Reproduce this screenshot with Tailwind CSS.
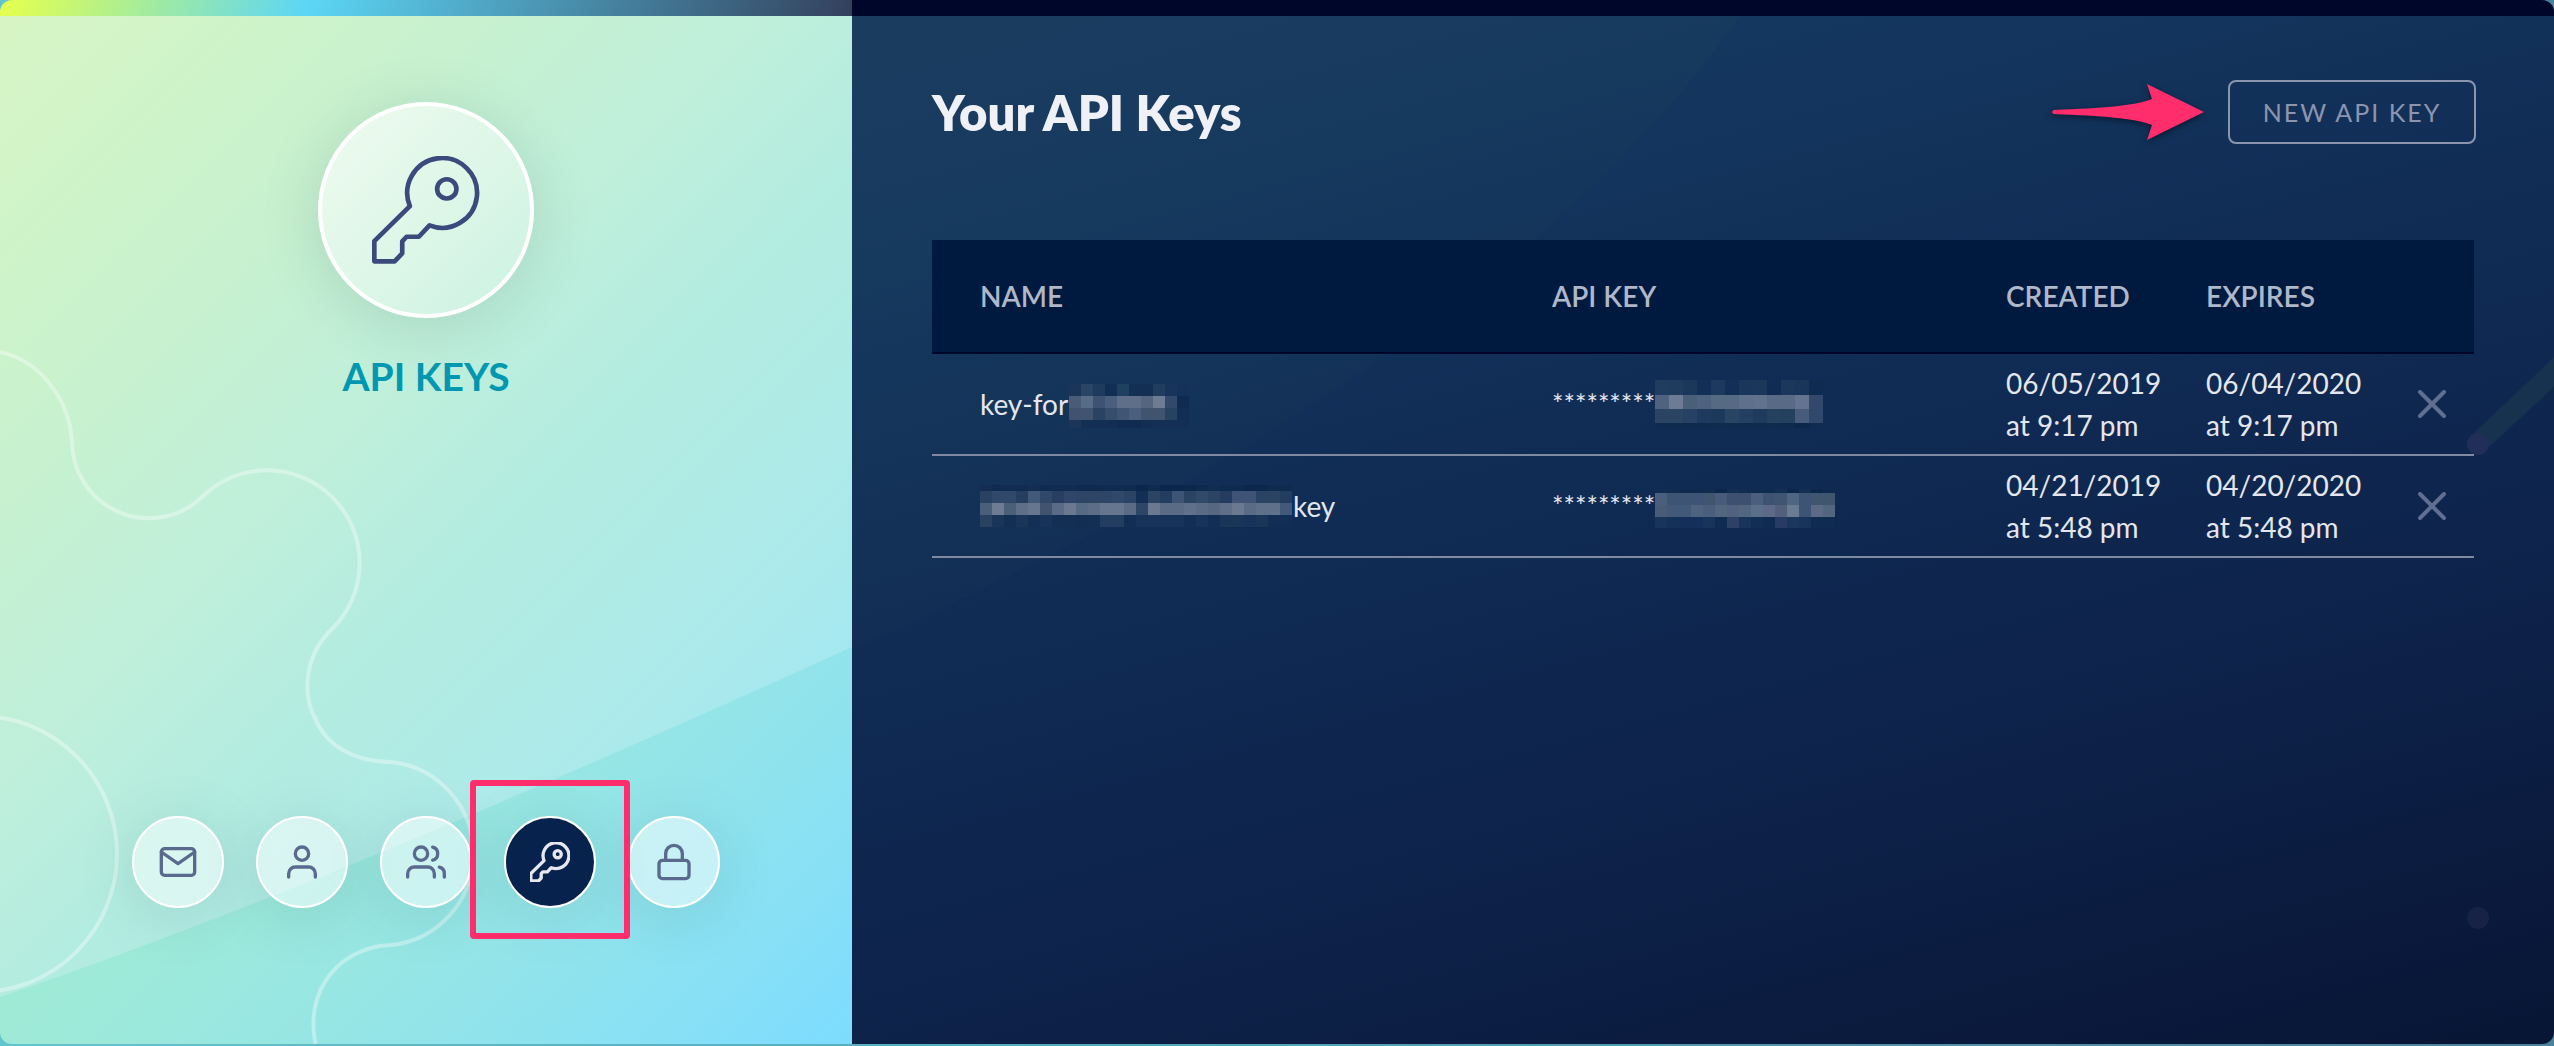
<!DOCTYPE html>
<html lang="en">
<head>
<meta charset="utf-8">
<title>API Keys</title>
<script src="https://cdn.jsdelivr.net/npm/@tailwindcss/browser@4"></script>
</head>
<body class="min-h-screen flex flex-col bg-linear-to-r from-[#62c4cc] to-[#4a819f] pb-[2px] font-['Lato',sans-serif] text-[28px] leading-[42px]">
<svg class="hidden" aria-hidden="true">
  <symbol id="key" viewBox="216 227 325 325">
    <path d="M223 483 L330 378 A105 105 0 1 1 389 436 L357 470 H320 L307 484 V520 L284 544 H223 Z"/>
    <circle cx="441" cy="326" r="29"/>
  </symbol>
</svg>
<div class="flex-1 flex flex-col rounded-xl overflow-hidden">
  <div class="flex h-4 shrink-0">
    <div class="w-[33.36%] bg-linear-[110deg,#e3ff50_1%,#5cd6f5_36%,#33405c]"></div>
    <div class="flex-1 bg-[#00052a]"></div>
  </div>
  <div class="flex-1 flex">
    <aside class="relative w-[33.36%] flex flex-col items-center justify-between pt-[86px] pb-[136px] bg-linear-[135deg,#b9f0b0_0%,#9fead6_54%,#92e4ea_78%,#7ddcff_100%]">
      <svg class="absolute inset-0 size-full" viewBox="0 16 852 1028" preserveAspectRatio="none" fill="none" aria-hidden="true">
        <defs>
          <linearGradient id="haze" gradientUnits="userSpaceOnUse" x1="0" y1="16" x2="940" y2="956">
            <stop offset="0" stop-color="#d7f5c4"/>
            <stop offset=".22" stop-color="#c9f2cd"/>
            <stop offset=".41" stop-color="#bfefdb"/>
            <stop offset=".53" stop-color="#b3ece0"/>
            <stop offset=".67" stop-color="#aeeae8"/>
            <stop offset=".8" stop-color="#a4e8f1"/>
          </linearGradient>
        </defs>
        <path d="M0 16 H852 V647 Q330 885 0 997 Z" fill="url(#haze)"/>
        <g stroke="#fff" stroke-opacity=".36" stroke-width="4">
          <path d="M0 352 C45 362 70 405 72 442 A77 77 0 0 0 201 498 A92 92 0 1 1 333 628 C300 659 305 700 315 718 C326 746 355 762 391 762 A92 92 0 0 1 391 945 C340 947 303 990 316 1046"/>
          <circle cx="-21" cy="854" r="138"/>
        </g>
      </svg>
      <div class="relative flex flex-col items-center">
        <div class="size-[216px] rounded-full border-4 border-white bg-linear-[135deg] from-white/70 to-white/20 shadow-[0_8px_60px_rgba(20,60,70,0.15)] flex items-center justify-center">
          <svg class="size-[108px]" fill="none" stroke="#3a4a7c" stroke-width="14" stroke-linejoin="round" aria-hidden="true"><use href="#key"/></svg>
        </div>
        <h2 class="mt-7 text-[39px] leading-[60px] font-bold text-[#0097b0]">API KEYS</h2>
      </div>
      <nav class="relative flex gap-8 text-[#5a6a8e]" aria-label="Account">
        <a href="#email" aria-label="Email" class="size-[92px] rounded-full border-2 border-white bg-white/50 shadow-[0_8px_60px_rgba(20,60,70,0.13)] flex items-center justify-center">
          <svg class="size-10" viewBox="0 0 24 24" fill="none" stroke="currentColor" stroke-width="2" stroke-linecap="round" stroke-linejoin="round"><path d="M4 4h16c1.1 0 2 .9 2 2v12c0 1.1-.9 2-2 2H4c-1.100 0-2-.9-2-2V6c0-1.100.9-2 2-2z"/><path d="M22 6l-10 7L2 6"/></svg>
        </a>
        <a href="#profile" aria-label="Profile" class="size-[92px] rounded-full border-2 border-white bg-white/50 shadow-[0_8px_60px_rgba(20,60,70,0.13)] flex items-center justify-center">
          <svg class="size-10" viewBox="0 0 24 24" fill="none" stroke="currentColor" stroke-width="2" stroke-linecap="round" stroke-linejoin="round"><path d="M20 21v-2a4 4 0 0 0-4-4H8a4 4 0 0 0-4 4v2"/><circle cx="12" cy="7" r="4"/></svg>
        </a>
        <a href="#team" aria-label="Team" class="size-[92px] rounded-full border-2 border-white bg-white/50 shadow-[0_8px_60px_rgba(20,60,70,0.13)] flex items-center justify-center">
          <svg class="size-10" viewBox="0 0 24 24" fill="none" stroke="currentColor" stroke-width="2" stroke-linecap="round" stroke-linejoin="round"><path d="M17 21v-2a4 4 0 0 0-4-4H5a4 4 0 0 0-4 4v2"/><circle cx="9" cy="7" r="4"/><path d="M23 21v-2a4 4 0 0 0-3-3.870"/><path d="M16 3.130a4 4 0 0 1 0 7.750"/></svg>
        </a>
        <a href="#api-keys" aria-label="API keys" aria-current="page" class="relative size-[92px] rounded-full border-2 border-white bg-[#06224d] shadow-[0_8px_60px_rgba(20,60,70,0.13)] flex items-center justify-center z-10">
          <svg class="size-10" fill="none" stroke="#e6e7ef" stroke-width="27" stroke-linejoin="round"><use href="#key"/></svg>
          <span class="absolute -inset-x-9 -top-[38px] -bottom-[33px] border-6 border-[#ff2d6c] rounded-sm pointer-events-none"></span>
        </a>
        <a href="#password" aria-label="Password" class="size-[92px] rounded-full border-2 border-white bg-white/50 shadow-[0_8px_60px_rgba(20,60,70,0.13)] flex items-center justify-center">
          <svg class="size-10" viewBox="0 0 24 24" fill="none" stroke="currentColor" stroke-width="2" stroke-linecap="round" stroke-linejoin="round"><rect x="3" y="11" width="18" height="11" rx="2"/><path d="M7 11V7a5 5 0 0 1 10 0v4"/></svg>
        </a>
      </nav>
    </aside>

    <main class="relative flex-1 px-20 pt-16 bg-linear-[165deg,#183b61_0%,#14375f_18%,#102c55_42%,#0d2148_72%,#081535_100%]">
      <svg class="absolute inset-0 size-full" viewBox="852 16 1702 1028" preserveAspectRatio="none" aria-hidden="true">
        <path d="M852 16 H1740 Q1500 360 852 650 Z" fill="#6a7840" fill-opacity=".03"/>
      </svg>
      <svg class="absolute top-0 right-0 w-[90px] h-[940px]" viewBox="2464 16 90 940" aria-hidden="true">
        <path d="M2474 433 L2554 357 V387 L2489 447 Z" fill="#17324f"/>
        <circle cx="2478" cy="444" r="11" fill="#212e57"/>
        <circle cx="2478" cy="918" r="11" fill="#162246"/>
      </svg>
      <header class="relative flex items-center">
        <h1 class="flex-1 text-[49px] leading-[64px] font-extrabold text-[#f0f0f7]">Your API Keys</h1>
        <svg class="w-[152px] h-[56px] mr-6 overflow-visible drop-shadow-[0_2px_3px_rgba(0,0,0,0.5)]" viewBox="0 0 152 56" fill="#ff2d6c" aria-hidden="true">
          <path d="M2 26 C50 24 82 22 100 15 L95 0 L152 28 L95 56 L100 41 C82 34 50 32 2 30 Q-2 28 2 26 Z"/>
        </svg>
        <button class="h-16 w-[248px] -mr-[2px] rounded-lg border-2 border-[#8c94ae] text-[25px] leading-[32px] tracking-[2px] text-[#8c94ae]">NEW API KEY</button>
      </header>

      <table class="relative mt-24 w-full table-fixed border-collapse text-left text-[#e4e6ee]">
        <colgroup><col><col class="w-[454px]"><col class="w-[200px]"><col class="w-[200px]"><col class="w-[68px]"></colgroup>
        <thead class="bg-[#001a3f] text-[#b0b7c9]">
          <tr class="h-[113px] border-b-2 border-[#00052a]">
            <th scope="col" class="pl-12 font-semibold">NAME</th>
            <th scope="col" class="font-semibold">API KEY</th>
            <th scope="col" class="font-semibold">CREATED</th>
            <th scope="col" class="font-semibold">EXPIRES</th>
            <td></td>
          </tr>
        </thead>
        <tbody>
          <tr class="h-[102px] border-b-2 border-[#7f8aa2]">
            <td class="pl-12"><div class="flex items-center">key-for<svg data-mosaic="name1" class="ml-px mt-1"></svg></div></td>
            <td><div class="flex items-center text-[27px]">*********<svg data-mosaic="key1"></svg></div></td>
            <td>06/05/2019<br>at 9:17 pm</td>
            <td>06/04/2020<br>at 9:17 pm</td>
            <td><button aria-label="Delete key" class="flex w-[52px] h-10 items-center justify-center"><svg class="size-[28px]" viewBox="0 0 28 28" stroke="#5f6e91" stroke-width="4" stroke-linecap="round"><path d="M2 2 L26 26 M26 2 L2 26"/></svg></button></td>
          </tr>
          <tr class="h-[102px] border-b-2 border-[#7f8aa2]">
            <td class="pl-12"><div class="flex items-center"><svg data-mosaic="name2" class="mr-px"></svg>key</div></td>
            <td><div class="flex items-center text-[27px]">*********<svg data-mosaic="key2" class="mt-1"></svg></div></td>
            <td>04/21/2019<br>at 5:48 pm</td>
            <td>04/20/2020<br>at 5:48 pm</td>
            <td><button aria-label="Delete key" class="flex w-[52px] h-10 items-center justify-center"><svg class="size-[28px]" viewBox="0 0 28 28" stroke="#5f6e91" stroke-width="4" stroke-linecap="round"><path d="M2 2 L26 26 M26 2 L2 26"/></svg></button></td>
          </tr>
        </tbody>
      </table>
    </main>
  </div>
</div>
<script>
  // Pixelated blocks that hide private text: cell width, row heights, colours by row.
  const mosaics = {
    name1: { cell: 12, heights: [12, 12, 12, 8], rows: [
      '1a345a 2a4465 1e3a5c 112e55 20405f 132f53 142f52 203d60 18345a 14315a',
      '4a5b78 576c86 3e5372 4a5f7e 5f6f89 5f6f89 54667f 6d7c93 33496b 0f2b52',
      '40526f 40536f 2b4363 364d6c 405573 4a5f7e 40536f 40536f 284262 132e55',
      '1c3559 132f54 132f54 122e52 0f2b50 0f2b50 122e52 132f54 142f56 142f56'] },
    name2: { cell: 12, heights: [6, 12, 12, 12], rows: [
      '132e52 0f2b50 102c50 102c50 132e52 0f2b50 102c50 102c50 0e2a4e 0e2a4e 0f2b50 0f2b50 0e2a4e 0b284c 0f2b50 0b284c 0b284c 0b284c 0e2a4e 102c50 0e2a4e 0e2a4e 0b284c 0b284c 0e2a4e 0e2a4e',
      '2a4262 30496a 30496a 263f60 43597a 30496a 283f62 30456a 2e4565 2e4565 2e4565 30496a 2b4464 142f55 2b4464 223d5f 3e5474 2b4464 304a69 2b4464 223d5f 3e5375 3e5375 2b4464 2b4464 223d5f',
      '4a6079 6d7c93 4a6079 5f6f89 66768e 40536f 5a6b87 6a7990 566a84 5c6d87 66768e 66768e 5a6b85 2e4768 6a7990 5a6b85 5a6b85 5f708a 5a6b85 56687f 5f6f89 6a7990 5a6b85 5f708a 5f708a 43597a',
      '2a4262 1b3559 142f54 1b3559 142f55 18335a 142f54 142f54 122e52 142f54 223d5f 223d5f 132e54 18335a 18335a 18335a 18335a 132e54 18335a 132e54 1b3559 1b3559 18335a 1b3559 132e54 132e54'] },
    key1: { cell: 14, heights: [15, 14, 14, 5], rows: [
      '203d60 1f3c5f 1b385b 142f57 1e395e 132e57 1a365a 1b385b 112b55 1c375c 1a355a 0e2b52',
      '4f6280 6d7c95 4a6079 4f6280 566a84 566a84 5f708c 61728d 586a85 586a85 64748f 32496d',
      '2b4464 2b4464 264163 1f3a5e 1c385b 2a4464 243f61 1e3a5d 26405f 24405f 485b7b 30486b',
      '0d2a4f 0d2a4f 0d2a4f 0d2a4f 0f2b50 0d2a4f 0d2a4f 0d2a4f 0f2b50 0d2a4f 0b284c 0f2b52'] },
    key2: { cell: 12, heights: [4, 12, 12, 11], rows: [
      '112d54 102c50 0e2a4e 0e2a4e 102c50 0b284c 142f54 102c50 0f2b50 0f2b50 142f54 0b284c 142f54 0b284c 0e2a4e',
      '4a5f7b 3e5474 3e5474 3e5474 40566f 485b7b 3e5070 3e5070 4a5f7e 3e5272 405473 4f6682 3e5474 40556f 40566f',
      '485b77 43597a 43597a 4f6280 4a5f7e 52677f 50627f 52677f 5a6f8a 5c6a87 525f7d 6a7b94 3e5474 5c6a87 52667f',
      '18345a 14315a 14305a 14305a 18345a 0f2b50 2e4066 18345a 122e54 0f2b50 263c64 1a365a 18345a 0f2b50 0f2b50'] }
  };
  const NS = 'http://www.w3.org/2000/svg';
  document.querySelectorAll('[data-mosaic]').forEach(svg => {
    const { cell, heights, rows } = mosaics[svg.dataset.mosaic];
    let y = 0, width = 0;
    rows.forEach((row, r) => {
      const colours = row.split(' ');
      colours.forEach((colour, c) => {
        const rect = document.createElementNS(NS, 'rect');
        rect.setAttribute('x', c * cell);
        rect.setAttribute('y', y);
        rect.setAttribute('width', cell);
        rect.setAttribute('height', heights[r]);
        rect.setAttribute('fill', '#' + colour);
        svg.appendChild(rect);
      });
      width = Math.max(width, colours.length * cell);
      y += heights[r];
    });
    svg.setAttribute('width', width);
    svg.setAttribute('height', y);
    svg.setAttribute('shape-rendering', 'crispEdges');
    svg.setAttribute('aria-hidden', 'true');
  });
</script>
</body>
</html>
